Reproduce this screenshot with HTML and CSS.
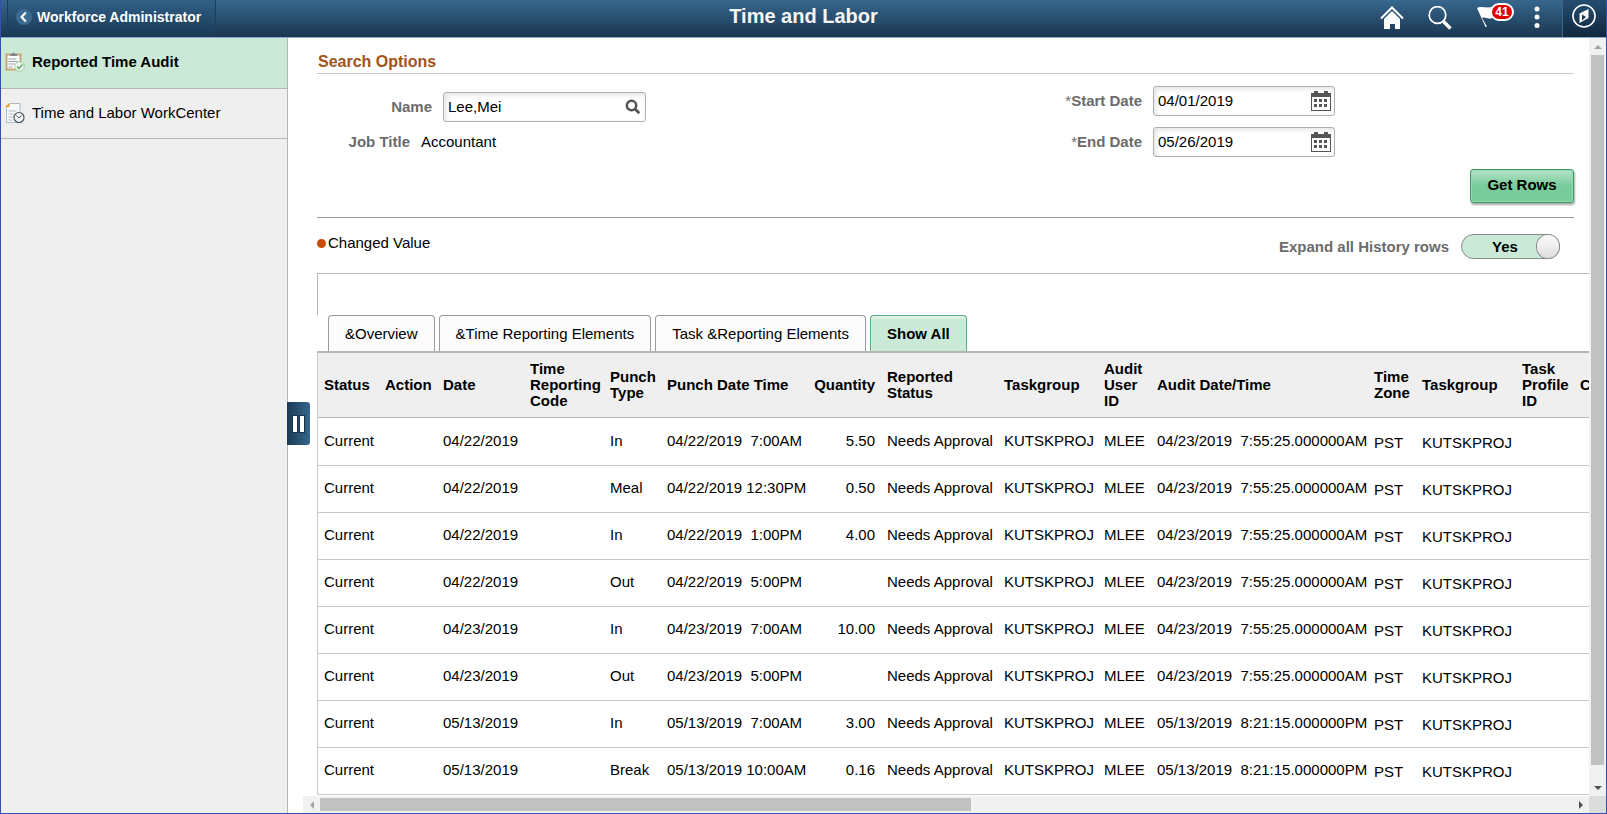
FILE: index.html
```html
<!DOCTYPE html>
<html lang="en">
<head>
    <meta charset="UTF-8">
    <meta name="viewport" content="width=device-width, initial-scale=1.0">
    <title>Time and Labor</title>
    <link rel="stylesheet" href="styles.css">
</head>
<body>
    <header class="banner">
        <div class="banner-left">
            <a href="#" class="back-button">
                <svg width="16" height="16" viewBox="0 0 16 16" aria-hidden="true">
                    <circle cx="8" cy="8" r="8" fill="#3a6c93"/>
                    <path d="M9.8 3.5 5.6 8l4.2 4.5" fill="none" stroke="#fff" stroke-width="2.2"/>
                </svg>
                Workforce Administrator
            </a>
        </div>
        <h1>Time and Labor</h1>
        <nav class="banner-icons">
            <a href="#" class="icon-home" aria-label="Home">
                <svg width="24" height="24" viewBox="0 0 24 24">
                    <path d="M1 12.500 12 1.500l11 11" fill="none" stroke="#fff" stroke-width="2"/>
                    <path d="M4 13 12 5l8 8v10h-5v-5h-5v5H4z" fill="#fff"/>
                </svg>
            </a>
            <a href="#" class="icon-search" aria-label="Search">
                <svg width="24" height="24" viewBox="0 0 24 24">
                    <circle cx="9.5" cy="9" r="8.300" fill="none" stroke="#fff" stroke-width="1.700"/>
                    <path d="m15.500 15.500 7 7" stroke="#fff" stroke-width="3.600"/>
                </svg>
            </a>
            <a href="#" class="icon-flag" aria-label="Notifications">
                <svg width="18" height="22" viewBox="0 0 18 22">
                    <path d="M0 2C4-.5 9 2.500 15 1v11c-4 2-7-1.500-10 0L10 20.500 8.500 21z" fill="#fff"/>
                </svg>
                <span class="badge">41</span>
            </a>
            <a href="#" class="icon-menu" aria-label="Actions">
                <svg width="6" height="22" viewBox="0 0 6 22" fill="#fff">
                    <circle cx="3" cy="3" r="2.500"/>
                    <circle cx="3" cy="11" r="2.500"/>
                    <circle cx="3" cy="19.500" r="2.500"/>
                </svg>
            </a>
            <a href="#" class="icon-navbar" aria-label="NavBar">
                <svg width="24" height="24" viewBox="0 0 24 24">
                    <circle cx="12" cy="12" r="11" fill="none" stroke="#fff" stroke-width="1.600"/>
                    <path d="M7.500 9.500 16.500 5v9l-9 5z" fill="#fff"/>
                    <path d="m10 10.500 4 2.500-4 3.500z" fill="#17324b"/>
                </svg>
            </a>
        </nav>
    </header>

    <div class="page">
        <nav class="sidebar">
            <a href="#" class="side-item active">
                <svg width="20" height="20" viewBox="0 0 20 20">
                    <path d="M1.500 2.500h14v15h-14z" fill="#fff" stroke="#c4a57d" stroke-width="2"/>
                    <path d="M5 4V2h2a1.500 1.500 0 0 1 3 0h2v2z" fill="#7f8790"/>
                    <path d="M3.500 7h8M3.500 9.500h9M3.500 12h6M3.500 15h4" stroke="#8d99a3"/>
                    <circle cx="14.500" cy="14.500" r="4.800" fill="#eef8f0" stroke="#9ccb9f"/>
                    <path d="m12 14.500 2 2 3.500-4" fill="none" stroke="#55a35b" stroke-width="1.200"/>
                </svg>
                Reported Time Audit
            </a>
            <a href="#" class="side-item">
                <svg width="20" height="20" viewBox="0 0 20 20">
                    <path d="M5 .5h10v19H1.500V4z" fill="#f7f8f9" stroke="#b3bcc4"/>
                    <path d="M0 4 4.500 0v4z" fill="#f39a1d"/>
                    <path d="M3.500 8h8M3.500 11h5M3.500 14h5M3.500 17h4" stroke="#b3bcc4"/>
                    <circle cx="14" cy="14.500" r="5" fill="#f4f4f4" stroke="#4a5661" stroke-width="1.200"/>
                    <path d="m11.500 12.500 2.500 2.500 2.500-2.500" fill="none" stroke="#4a5661"/>
                </svg>
                Time and Labor WorkCenter
            </a>
            <button type="button" class="collapse-button" aria-label="Collapse navigation"><i></i><i></i></button>
        </nav>

        <div class="content">
            <main>
                <section class="search-options">
                    <h2>Search Options</h2>
                    <form class="search-form">
                        <div class="form-column">
                            <div class="form-group">
                                <label for="name">Name</label>
                                <div class="field name-field">
                                    <input type="text" id="name" value="Lee,Mei">
                                    <button type="button" aria-label="Look up Name">
                                        <svg width="16" height="16" viewBox="0 0 16 16">
                                            <circle cx="6.500" cy="6.500" r="4.700" fill="none" stroke="#555" stroke-width="2.500"/>
                                            <path d="m9.800 9.800 4.500 4.500" stroke="#555" stroke-width="2.800"/>
                                        </svg>
                                    </button>
                                </div>
                            </div>
                            <div class="form-group">
                                <span class="job-label">Job Title</span>
                                <span>Accountant</span>
                            </div>
                        </div>
                        <div class="form-column dates">
                            <div class="form-group">
                                <label for="start-date"><span class="required">*</span>Start Date</label>
                                <div class="field date-field">
                                    <input type="text" id="start-date" value="04/01/2019">
                                    <button type="button" aria-label="Choose start date">
                                        <svg width="20" height="20" viewBox="0 0 20 20" fill="#555">
                                            <path d="M0 2h3V0h4v2h6V0h4v2h3v18H0zm1 4v13h18V6z" fill-rule="evenodd"/>
                                            <path d="M3 8h3v3H3zm5 0h3v3H8zm5 0h3v3h-3zM3 13h3v3H3zm5 0h3v3H8zm5 0h3v3h-3z"/>
                                        </svg>
                                    </button>
                                </div>
                            </div>
                            <div class="form-group">
                                <label for="end-date"><span class="required">*</span>End Date</label>
                                <div class="field date-field">
                                    <input type="text" id="end-date" value="05/26/2019">
                                    <button type="button" aria-label="Choose end date">
                                        <svg width="20" height="20" viewBox="0 0 20 20" fill="#555">
                                            <path d="M0 2h3V0h4v2h6V0h4v2h3v18H0zm1 4v13h18V6z" fill-rule="evenodd"/>
                                            <path d="M3 8h3v3H3zm5 0h3v3H8zm5 0h3v3h-3zM3 13h3v3H3zm5 0h3v3H8zm5 0h3v3h-3z"/>
                                        </svg>
                                    </button>
                                </div>
                            </div>
                        </div>
                    </form>
                    <div class="form-actions">
                        <button type="button" class="get-rows">Get Rows</button>
                    </div>
                </section>

                <div class="legend">
                    <span class="changed-value">Changed Value</span>
                    <div class="expand">
                        <label for="expand-rows">Expand all History rows</label>
                        <span class="switch">
                            <input type="checkbox" id="expand-rows" checked>
                            <span class="switch-text">Yes</span>
                        </span>
                    </div>
                </div>

                <div class="grid">
                    <div class="grid-top"></div>
                    <div class="tabs">
                        <button type="button">&amp;Overview</button>
                        <button type="button">&amp;Time Reporting Elements</button>
                        <button type="button">Task &amp;Reporting Elements</button>
                        <button type="button" class="active">Show All</button>
                    </div>
                    <table>
                        <colgroup>
                            <col class="col-status">
                            <col class="col-action">
                            <col class="col-date">
                            <col class="col-trc">
                            <col class="col-punch">
                            <col class="col-punch-time">
                            <col class="col-quantity">
                            <col class="col-reported">
                            <col class="col-taskgroup">
                            <col class="col-user">
                            <col class="col-audit-time">
                            <col class="col-zone">
                            <col class="col-taskgroup">
                            <col class="col-profile">
                            <col class="col-last">
                        </colgroup>
                        <thead>
                            <tr>
                                <th>Status</th>
                                <th>Action</th>
                                <th>Date</th>
                                <th>Time Reporting Code</th>
                                <th>Punch Type</th>
                                <th>Punch Date Time</th>
                                <th class="number">Quantity</th>
                                <th>Reported<br>Status</th>
                                <th>Taskgroup</th>
                                <th>Audit User ID</th>
                                <th>Audit Date/Time</th>
                                <th>Time Zone</th>
                                <th>Taskgroup</th>
                                <th>Task Profile ID</th>
                                <th>C</th>
                            </tr>
                        </thead>
                        <tbody>
                            <tr><td>Current</td><td></td><td>04/22/2019</td><td></td><td>In</td><td>04/22/2019&nbsp; 7:00AM</td><td class="number">5.50</td><td>Needs Approval</td><td>KUTSKPROJ</td><td>MLEE</td><td>04/23/2019&nbsp; 7:55:25.000000AM</td><td class="task">PST</td><td class="task">KUTSKPROJ</td><td></td><td></td></tr>
                            <tr><td>Current</td><td></td><td>04/22/2019</td><td></td><td>Meal</td><td>04/22/2019 12:30PM</td><td class="number">0.50</td><td>Needs Approval</td><td>KUTSKPROJ</td><td>MLEE</td><td>04/23/2019&nbsp; 7:55:25.000000AM</td><td class="task">PST</td><td class="task">KUTSKPROJ</td><td></td><td></td></tr>
                            <tr><td>Current</td><td></td><td>04/22/2019</td><td></td><td>In</td><td>04/22/2019&nbsp; 1:00PM</td><td class="number">4.00</td><td>Needs Approval</td><td>KUTSKPROJ</td><td>MLEE</td><td>04/23/2019&nbsp; 7:55:25.000000AM</td><td class="task">PST</td><td class="task">KUTSKPROJ</td><td></td><td></td></tr>
                            <tr><td>Current</td><td></td><td>04/22/2019</td><td></td><td>Out</td><td>04/22/2019&nbsp; 5:00PM</td><td class="number"></td><td>Needs Approval</td><td>KUTSKPROJ</td><td>MLEE</td><td>04/23/2019&nbsp; 7:55:25.000000AM</td><td class="task">PST</td><td class="task">KUTSKPROJ</td><td></td><td></td></tr>
                            <tr><td>Current</td><td></td><td>04/23/2019</td><td></td><td>In</td><td>04/23/2019&nbsp; 7:00AM</td><td class="number">10.00</td><td>Needs Approval</td><td>KUTSKPROJ</td><td>MLEE</td><td>04/23/2019&nbsp; 7:55:25.000000AM</td><td class="task">PST</td><td class="task">KUTSKPROJ</td><td></td><td></td></tr>
                            <tr><td>Current</td><td></td><td>04/23/2019</td><td></td><td>Out</td><td>04/23/2019&nbsp; 5:00PM</td><td class="number"></td><td>Needs Approval</td><td>KUTSKPROJ</td><td>MLEE</td><td>04/23/2019&nbsp; 7:55:25.000000AM</td><td class="task">PST</td><td class="task">KUTSKPROJ</td><td></td><td></td></tr>
                            <tr><td>Current</td><td></td><td>05/13/2019</td><td></td><td>In</td><td>05/13/2019&nbsp; 7:00AM</td><td class="number">3.00</td><td>Needs Approval</td><td>KUTSKPROJ</td><td>MLEE</td><td>05/13/2019&nbsp; 8:21:15.000000PM</td><td class="task">PST</td><td class="task">KUTSKPROJ</td><td></td><td></td></tr>
                            <tr><td>Current</td><td></td><td>05/13/2019</td><td></td><td>Break</td><td>05/13/2019 10:00AM</td><td class="number">0.16</td><td>Needs Approval</td><td>KUTSKPROJ</td><td>MLEE</td><td>05/13/2019&nbsp; 8:21:15.000000PM</td><td class="task">PST</td><td class="task">KUTSKPROJ</td><td></td><td></td></tr>
                        </tbody>
                    </table>
                </div>
            </main>
            <div class="scrollbar vertical">
                <span class="arrow up"></span>
                <div class="track"><div class="thumb"></div></div>
                <span class="arrow down"></span>
            </div>
            <div class="scrollbar horizontal">
                <span class="arrow left"></span>
                <div class="track"><div class="thumb"></div></div>
                <span class="arrow right"></span>
            </div>
            <div class="scroll-corner"></div>
        </div>
    </div>
</body>
</html>
```

FILE: styles.css
```css
* {
    box-sizing: border-box;
}

body {
    display: flex;
    flex-direction: column;
    height: 100vh;
    margin: 0;
    border: 1px solid #3550b5;
    border-top: 0;
    overflow: hidden;
    font-family: "Liberation Sans", Arial, sans-serif;
    font-size: 15px;
    line-height: 18px;
    color: #000;
    background-color: #fff;
}

a {
    color: inherit;
    text-decoration: none;
}

button, input {
    font: inherit;
    color: inherit;
}

svg {
    display: block;
    flex: none;
}

/* Banner */
.banner {
    display: grid;
    grid-template-columns: 1fr auto 1fr;
    flex: none;
    height: 38px;
    color: #fff;
    background: linear-gradient(#37678e, #1a3650);
    border-bottom: 1px solid #86a9cc;
}

.banner h1 {
    margin: 0;
    font-size: 20px;
    line-height: 32px;
    color: #f5f5f5;
}

.banner-left {
    padding-left: 6px;
}

.back-button {
    display: inline-flex;
    align-items: center;
    gap: 5px;
    height: 34px;
    padding: 0 14px 0 8px;
    font-size: 14px;
    font-weight: bold;
    border: 1px solid #1d3f5e;
    border-top: 0;
    border-radius: 0 0 3px 3px;
    background: linear-gradient(#316087, #1c3c59);
}

.banner-icons {
    display: flex;
    justify-content: flex-end;
}

.banner-icons a {
    display: flex;
    padding-top: 6px;
}

.icon-home {
    margin-right: 24px;
}

.icon-search {
    margin-right: 25px;
}

.icon-flag {
    position: relative;
    margin-right: 39px;
}

.badge {
    position: absolute;
    top: 3px;
    left: 13px;
    width: 24px;
    height: 18px;
    border: 2px solid #fff;
    border-radius: 9px;
    font-size: 12px;
    font-weight: bold;
    line-height: 14px;
    text-align: center;
    background-color: #e00000;
}

.icon-menu {
    margin-right: 22px;
}

.banner-icons .icon-navbar {
    width: 44px;
    padding-top: 4px;
    padding-left: 9px;
    border-left: 1px solid #3f6685;
    background: linear-gradient(#254d70, #10283e);
}

/* Navigation */
.page {
    display: flex;
    flex: 1;
    min-height: 0;
}

.sidebar {
    position: relative;
    flex: none;
    width: 287px;
    border-right: 1px solid #b5b5b5;
    background-color: #efefef;
}

.side-item {
    display: flex;
    align-items: center;
    gap: 7px;
    height: 50px;
    padding: 0 0 2px 4px;
    border-bottom: 1px solid #b5b5b5;
}

.side-item.active {
    height: 51px;
    font-weight: bold;
    background-color: #caead7;
}

/* Handle over the edge of the navigation */
.collapse-button {
    display: flex;
    align-items: center;
    justify-content: center;
    gap: 3px;
    position: absolute;
    top: 47%;
    left: 100%;
    z-index: 1;
    width: 23px;
    height: 43px;
    padding: 0;
    border: 0;
    border-radius: 0 3px 3px 0;
    background: linear-gradient(to right, #1c3a55, #36668d);
}

.collapse-button i {
    width: 4px;
    height: 16px;
    background-color: #fff;
    outline: 1px solid #17314a;
}

/* Content with its scrollbars */
.content {
    display: grid;
    grid-template-columns: 15px minmax(0, 1fr) 17px;
    grid-template-rows: minmax(0, 1fr) 17px;
    flex: 1;
    min-width: 0;
}

main {
    grid-column: 1 / 3;
    padding-left: 29px;
    overflow: hidden;
}

.scrollbar {
    display: flex;
    background-color: #f1f1f1;
}

.vertical {
    flex-direction: column;
}

.horizontal {
    grid-column: 2;
}

.scroll-corner {
    background-color: #dcdcdc;
}

.track {
    flex: 1;
}

.thumb {
    background-color: #c1c1c1;
}

.vertical .thumb {
    height: 98%;
    margin: 0 2px;
}

.horizontal .track {
    padding: 2px 0;
}

.horizontal .thumb {
    width: 52%;
    height: 13px;
}

.arrow {
    display: flex;
    align-items: center;
    justify-content: center;
    width: 17px;
    height: 17px;
}

.arrow::before {
    content: "";
    border: 4px solid transparent;
}

.up::before {
    border-top: 0;
    border-bottom-color: #a3a3a3;
}

.down::before {
    border-bottom: 0;
    border-top-color: #505050;
}

.left::before {
    border-left: 0;
    border-right-color: #a3a3a3;
}

.right::before {
    border-right: 0;
    border-left-color: #505050;
}

/* Search options */
.search-options {
    height: 180px;
    margin-right: 15px;
    border-bottom: 1px solid #999;
}

h2 {
    margin: 0;
    padding: 15px 0 2px 1px;
    border-bottom: 1px solid #c8c8c8;
    font-size: 16px;
    line-height: 18px;
    color: #a2541b;
}

.search-form {
    display: flex;
    justify-content: space-between;
    height: 95px;
    padding-right: 239px;
}

.form-column {
    padding-top: 18px;
}

.form-group {
    display: flex;
    align-items: center;
    gap: 11px;
    margin-bottom: 11px;
}

.form-group label, .job-label, .expand label {
    font-weight: bold;
    color: #6b6b6b;
}

.name-field {
    width: 203px;
}

.form-column label {
    width: 115px;
    text-align: right;
}

.job-label {
    width: 93px;
    text-align: right;
}

.form-column.dates {
    padding-top: 12px;
}

.required {
    font-weight: normal;
}

.field {
    display: flex;
    align-items: center;
    height: 30px;
    padding: 0 4px;
    border: 1px solid #b0b0b0;
    border-radius: 3px;
    box-shadow: inset 2px 2px 5px #e3e3e3;
}

.date-field {
    width: 182px;
    padding-right: 3px;
}

.field input {
    flex: 1;
    min-width: 0;
    padding: 0;
    border: 0;
    outline: 0;
    background: none;
}

.field button {
    padding: 0;
    border: 0;
    background: none;
}

.form-actions {
    display: flex;
    justify-content: flex-end;
}

.get-rows {
    width: 104px;
    height: 34px;
    padding: 0 0 2px;
    border: 1px solid #3d9a68;
    border-radius: 3px;
    font-weight: bold;
    background: linear-gradient(#b4e4c8, #78cb9b 50%, #78cb9b);
    box-shadow: 1px 2px 2px #aaa, inset 0 0 1px 1px #97dab3;
}

/* Legend and toggle */
.legend {
    display: flex;
    justify-content: space-between;
    height: 55px;
    padding: 16px 29px 0 0;
}

.changed-value {
    display: flex;
    align-items: center;
    gap: 2px;
    height: 18px;
}

.changed-value::before {
    content: "";
    width: 9px;
    height: 9px;
    border-radius: 50%;
    background-color: #cc4b04;
}

.expand {
    display: flex;
    align-items: center;
    gap: 12px;
    height: 25px;
}

.switch {
    position: relative;
    display: flex;
}

.switch input {
    display: flex;
    justify-content: flex-end;
    width: 99px;
    height: 25px;
    margin: 0;
    border: 1px solid #8a8a8a;
    border-radius: 13px;
    background-color: #caead7;
    appearance: none;
}

.switch input::after {
    content: "";
    width: 22px;
    height: 23px;
    border-radius: 12px;
    background: linear-gradient(#fbfbfb, #dedede);
    box-shadow: 0 0 0 1px #8a8a8a;
}

.switch-text {
    position: absolute;
    top: 4px;
    left: 31px;
    font-weight: bold;
    pointer-events: none;
}

/* Grid */
.grid-top {
    height: 42px;
    border-top: 1px solid #b5b5b5;
    border-left: 1px solid #b5b5b5;
}

.tabs {
    display: flex;
    gap: 4px;
    padding-left: 11px;
}

.tabs button {
    height: 36px;
    padding: 0 16px;
    border: 1px solid #999;
    border-bottom: 0;
    border-radius: 4px 4px 0 0;
    background-color: #fcfcfc;
}

.tabs button.active {
    border-color: #55b07e;
    font-weight: bold;
    background-color: #caead7;
    box-shadow: inset 0 2px 2px #e3f5ea;
}

table {
    width: 1360px;
    border-top: 2px solid #b5b5b5;
    border-left: 1px solid #c8c8c8;
    border-spacing: 0;
    table-layout: fixed;
}

th {
    height: 65px;
    padding: 0 0 0 6px;
    border-bottom: 1px solid #b5b5b5;
    line-height: 16px;
    text-align: left;
    background-color: #efefef;
}

td {
    height: 47px;
    padding: 0 0 2px 6px;
    border-bottom: 1px solid #c8c8c8;
    white-space: nowrap;
}

tbody tr:first-child td {
    height: 48px;
}

.number {
    padding-right: 6px;
    text-align: right;
}

/* Task columns sit a little lower in the row */
.task {
    padding-top: 4px;
}

.col-status {
    width: 61px;
}

.col-action {
    width: 58px;
}

.col-date {
    width: 87px;
}

.col-trc {
    width: 80px;
}

.col-punch {
    width: 57px;
}

.col-punch-time {
    width: 143px;
}

.col-quantity {
    width: 77px;
}

.col-reported {
    width: 117px;
}

.col-taskgroup {
    width: 100px;
}

.col-user {
    width: 53px;
}

.col-audit-time {
    width: 217px;
}

.col-zone {
    width: 48px;
}

.col-profile {
    width: 58px;
}
```
